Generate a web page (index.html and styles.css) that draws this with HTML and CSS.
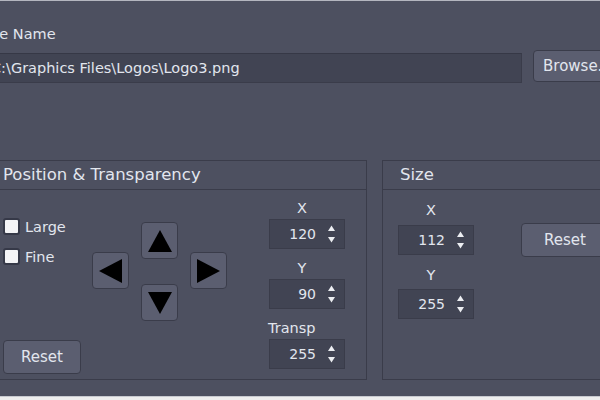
FILE: index.html
```html
<!DOCTYPE html>
<html>
<head>
<meta charset="utf-8">
<link rel="stylesheet" href="styles.css">
</head>
<body>
<div class="topline"></div>
<div class="app">
  <div class="field-label">File Name</div>
  <div class="file-row">
    <div class="path">C:\Graphics Files\Logos\Logo3.png</div>
    <button class="btn browse">Browse...</button>
  </div>
  <div class="groups">
    <section class="group pos">
      <div class="group-head">Position &amp; Transparency</div>
      <div class="group-body">
        <div class="opts">
          <label class="check"><span class="box"></span>Large</label>
          <label class="check"><span class="box"></span>Fine</label>
          <button class="btn reset">Reset</button>
        </div>
        <div class="pad">
          <button class="arrow up"><svg width="24" height="22" viewBox="0 0 24 22"><polygon points="12,0 24,22 0,22"/></svg></button>
          <button class="arrow left"><svg width="23" height="24" viewBox="0 0 23 24"><polygon points="0,12 23,0 23,24"/></svg></button>
          <button class="arrow right"><svg width="23" height="24" viewBox="0 0 23 24"><polygon points="23,12 0,0 0,24"/></svg></button>
          <button class="arrow down"><svg width="24" height="22" viewBox="0 0 24 22"><polygon points="0,0 24,0 12,22"/></svg></button>
        </div>
        <div class="spins">
          <div class="spin-label">X</div>
          <div class="spin"><span class="val">120</span><svg class="sarr" width="7" height="18" viewBox="0 0 7 18"><polygon points="0,6 3.5,0.5 7,6"/><polygon points="0,12 7,12 3.5,17.5"/></svg></div>
          <div class="spin-label">Y</div>
          <div class="spin"><span class="val">90</span><svg class="sarr" width="7" height="18" viewBox="0 0 7 18"><polygon points="0,6 3.5,0.5 7,6"/><polygon points="0,12 7,12 3.5,17.5"/></svg></div>
          <div class="spin-label left">Transp</div>
          <div class="spin"><span class="val">255</span><svg class="sarr" width="7" height="18" viewBox="0 0 7 18"><polygon points="0,6 3.5,0.5 7,6"/><polygon points="0,12 7,12 3.5,17.5"/></svg></div>
        </div>
      </div>
    </section>
    <section class="group size">
      <div class="group-head">Size</div>
      <div class="group-body">
        <div class="spins2">
          <div class="spin-label x2">X</div>
          <div class="spin s2a"><span class="val">112</span><svg class="sarr" width="7" height="18" viewBox="0 0 7 18"><polygon points="0,6 3.5,0.5 7,6"/><polygon points="0,12 7,12 3.5,17.5"/></svg></div>
          <div class="spin-label y2">Y</div>
          <div class="spin"><span class="val">255</span><svg class="sarr" width="7" height="18" viewBox="0 0 7 18"><polygon points="0,6 3.5,0.5 7,6"/><polygon points="0,12 7,12 3.5,17.5"/></svg></div>
        </div>
        <button class="btn reset2">Reset</button>
      </div>
    </section>
  </div>
</div>
<div class="bottomline"></div>
</body>
</html>
```
FILE: styles.css
```css
html, body {
  margin: 0;
  padding: 0;
}
body {
  width: 600px;
  height: 400px;
  overflow: hidden;
  background: #4d5060;
  font-family: "DejaVu Sans", sans-serif;
  font-size: 14.5px;
  color: #e2e6ee;
}
.topline {
  height: 1px;
  background: #b4b6bf;
}
.app {
  margin-left: -14px;
  padding-top: 25px;
  width: 650px;
}
.field-label {
  line-height: 17px;
  height: 17px;
  margin-left: -2px;
}
.file-row {
  display: flex;
  align-items: flex-start;
  margin-top: 7px;
}
.path {
  width: 536px;
  height: 30px;
  margin-top: 3px;
  box-sizing: border-box;
  background: #414453;
  border: 1px solid #3a3c4a;
  border-top-color: #363846;
  padding-left: 4px;
  line-height: 28px;
  white-space: nowrap;
}
.btn {
  font-family: "DejaVu Sans", sans-serif;
  font-size: 15px;
  color: #e2e6ee;
  background: #5b5e70;
  border: 1px solid #3a3c4a;
  border-radius: 4px;
  box-sizing: border-box;
  padding: 0;
  margin: 0;
}
.browse {
  margin-left: 11px;
  width: 80px;
  height: 32px;
  text-align: left;
  padding-left: 9px;
  white-space: nowrap;
  overflow: hidden;
}
.groups {
  display: flex;
  margin-top: 77px;
}
.group {
  height: 220px;
  box-sizing: border-box;
  border: 1px solid #3a3c4a;
  display: flex;
  flex-direction: column;
}
.pos {
  width: 381px;
}
.size {
  width: 240px;
  margin-left: 15px;
}
.group-head {
  height: 28px;
  line-height: 28px;
  font-size: 16.5px;
  padding-left: 16px;
  border-bottom: 1px solid #3a3c4a;
  white-space: nowrap;
}
.size .group-head {
  padding-left: 17px;
}
.group-body {
  flex: 1;
  display: flex;
  padding-left: 16px;
}
.opts {
  width: 78px;
  display: flex;
  flex-direction: column;
  padding-top: 28px;
  padding-bottom: 6px;
  box-sizing: border-box;
}
.check {
  display: flex;
  align-items: center;
  height: 17px;
  margin-bottom: 13px;
  white-space: nowrap;
}
.box {
  width: 17px;
  height: 17px;
  box-sizing: border-box;
  border: 2px solid #363948;
  border-radius: 3px;
  background: #f4f4f6;
  margin-right: 5px;
}
.reset {
  margin-top: auto;
  width: 78px;
  height: 34px;
}
.pad {
  margin-left: 11px;
  margin-top: 32px;
  display: grid;
  grid-template-columns: 37px 37px 37px;
  column-gap: 12px;
  grid-template-rows: 30px 7px 25px 5px 32px;
  height: 99px;
}
.arrow {
  background: #5b5e70;
  border: 1px solid #3a3c4a;
  border-radius: 4px;
  padding: 0;
  margin: 0;
  display: flex;
  align-items: center;
  justify-content: center;
  box-sizing: border-box;
}
.arrow svg {
  fill: #000;
  display: block;
}
.up {
  grid-column: 2;
  grid-row: 1 / 3;
}
.left {
  grid-column: 1;
  grid-row: 2 / 5;
}
.right {
  grid-column: 3;
  grid-row: 2 / 5;
}
.down {
  grid-column: 2;
  grid-row: 4 / 6;
}
.spins {
  margin-left: 42px;
  padding-top: 10px;
  width: 76px;
}
.spin-label {
  height: 17px;
  line-height: 17px;
  margin-bottom: 2px;
  text-align: center;
  padding-right: 10px;
  white-space: nowrap;
}
.spin-label.left {
  text-align: left;
  padding-right: 0;
  margin-left: -1px;
}
.spin {
  height: 30px;
  box-sizing: border-box;
  background: #414453;
  border: 1px solid #3a3c4a;
  display: flex;
  align-items: center;
  margin-bottom: 11px;
  font-size: 14px;
}
.val {
  flex: 1;
  text-align: right;
}
.sarr {
  fill: #eceef2;
  margin: 0 9px 0 12px;
  display: block;
}
.spins2 {
  width: 76px;
  padding-top: 12px;
  margin-left: -1px;
}
.x2 {
  margin-bottom: 6px;
}
.s2a {
  margin-bottom: 12px;
}
.y2 {
  margin-bottom: 5px;
}
.reset2 {
  margin-left: 47px;
  margin-top: 33px;
  width: 88px;
  height: 34px;
}
.bottomline {
  margin-top: 16px;
  height: 4px;
  box-sizing: border-box;
  border-top: 1px solid #c8cad0;
  background: #eeeeee;
}
```
